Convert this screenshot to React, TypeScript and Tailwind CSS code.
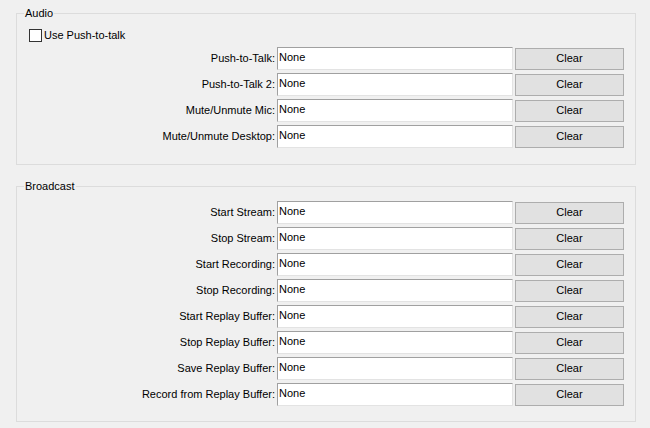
import React from "react";

const audioRows = ["Push-to-Talk:", "Push-to-Talk 2:", "Mute/Unmute Mic:", "Mute/Unmute Desktop:"];
const broadcastRows = [
  "Start Stream:",
  "Stop Stream:",
  "Start Recording:",
  "Stop Recording:",
  "Start Replay Buffer:",
  "Stop Replay Buffer:",
  "Save Replay Buffer:",
  "Record from Replay Buffer:",
];

function HotkeyRow({ label }: { label: string }) {
  return (
    <div className="flex items-center h-[23px] mb-[3px] last:mb-0">
      <div className="flex-1 text-right pr-[2px] leading-none">{label}</div>
      <div className="w-[236px] h-[23px] bg-white border-t border-l border-[#a0a0a0] border-r border-b border-r-[#e3e3e3] border-b-[#e3e3e3] pl-[1px] flex items-start pt-[4px] leading-none">
        None
      </div>
      <button className="ml-[2px] w-[109px] h-[22px] bg-[#e1e1e1] border border-[#adadad] text-black leading-none">
        Clear
      </button>
    </div>
  );
}

function Group({ title, className, children }: { title: string; className: string; children: React.ReactNode }) {
  return (
    <div className={`relative border border-[#dcdcdc] pr-[11px] ${className}`}>
      <span className="absolute left-[7px] -top-[6px] bg-[#f0f0f0] px-[1px] leading-none">{title}</span>
      {children}
    </div>
  );
}

export default function App() {
  return (
    <div
      className="w-[650px] h-[428px] bg-[#f0f0f0] text-[11px] text-black overflow-hidden pt-[13px] pl-[16px]"
      style={{ fontFamily: '"Liberation Sans", Arial, sans-serif' }}
    >
      <div className="w-[620px]">
        <Group title="Audio" className="pt-[15px] pb-[16px]">
          <label className="flex items-center h-[13px] pl-[12px]">
            <span className="w-[13px] h-[13px] border border-[#333333] bg-white" />
            <span className="ml-[2px] leading-none">Use Push-to-talk</span>
          </label>
          <div className="mt-[5px]">
            {audioRows.map((r) => (
              <HotkeyRow key={r} label={r} />
            ))}
          </div>
        </Group>
        <Group title="Broadcast" className="mt-[21px] pt-[14px] pb-[15px]">
          {broadcastRows.map((r) => (
            <HotkeyRow key={r} label={r} />
          ))}
        </Group>
      </div>
    </div>
  );
}
